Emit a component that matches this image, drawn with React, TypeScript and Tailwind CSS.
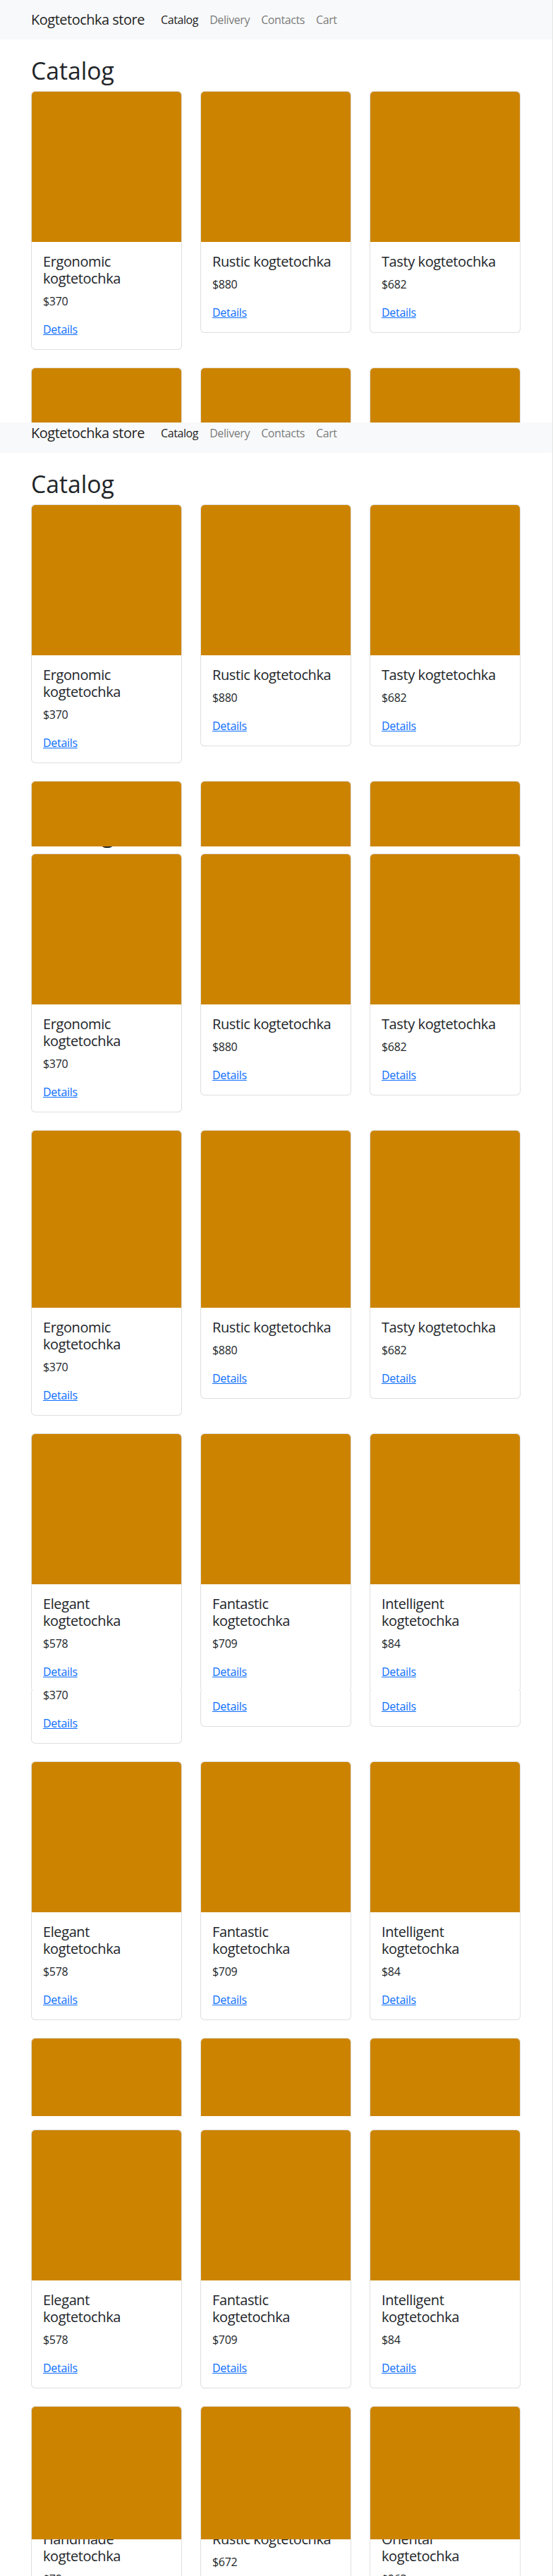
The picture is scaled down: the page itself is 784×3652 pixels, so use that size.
import React from "react";

type Product = { lines: string[]; price: string };

const ergonomic: Product = { lines: ["Ergonomic", "kogtetochka"], price: "$370" };
const rustic: Product = { lines: ["Rustic kogtetochka"], price: "$880" };
const tasty: Product = { lines: ["Tasty kogtetochka"], price: "$682" };
const elegant: Product = { lines: ["Elegant", "kogtetochka"], price: "$578" };
const fantastic: Product = { lines: ["Fantastic", "kogtetochka"], price: "$709" };
const intelligent: Product = { lines: ["Intelligent", "kogtetochka"], price: "$84" };
const handmade: Product = { lines: ["Handmade", "kogtetochka"], price: "$79" };
const rusticCheap: Product = { lines: ["Rustic kogtetochka"], price: "$672" };
const oriental: Product = { lines: ["Oriental", "kogtetochka"], price: "$963" };

const R1 = [ergonomic, rustic, tasty];
const R2 = [elegant, fantastic, intelligent];
const R3 = [handmade, rusticCheap, oriental];

// the capture was stitched from several scroll positions:
// h = visible height on screen, p = page offset at the top of that strip
const slices = [
  { h: 599, p: 0, rows: [R1, R1] },
  { h: 601, p: 13, rows: [R1, R1] },
  { h: 500, p: 119, rows: [R1, R1] },
  { h: 697, p: 581, rows: [R1, R1, R2] },
  { h: 603, p: 421, rows: [R1, R2, R3] },
  { h: 600, p: 502, rows: [R1, R2, R3] },
  { h: 52, p: 1155, rows: [R1, R2, R3] },
];

const navLinks = ["Catalog", "Delivery", "Contacts", "Cart"];

const Navbar = () => (
  <nav className="h-[56px] bg-[#f8f9fa] flex items-center px-[44px]">
    <a className="w-[176px] shrink-0 whitespace-nowrap text-[20px] leading-[30px] tracking-[-0.5px] text-black/90">
      Kogtetochka store
    </a>
    <div className="flex items-center">
      {navLinks.map((label, i) => (
        <a
          key={label}
          className={`px-2 text-[16px] leading-[24px] tracking-[-0.4px] ${
            i === 0 ? "text-black/90" : "text-black/55"
          }`}
        >
          {label}
        </a>
      ))}
    </div>
  </nav>
);

const Card = ({ product }: { product: Product }) => (
  <div className="w-[214px] shrink-0 rounded-[6px] border border-black/[0.125] bg-white overflow-hidden">
    <div className="h-[213px] bg-[#cc8400]" />
    <div className="p-4 text-[16px] leading-[24px] tracking-[-0.3px] text-[#212529]">
      <h5 className="mb-2 text-[20px] leading-[24px] font-medium tracking-[-0.4px]">
        {product.lines.map((line) => (
          <span key={line} className="block whitespace-nowrap">
            {line}
          </span>
        ))}
      </h5>
      <p className="mb-4">{product.price}</p>
      <a className="text-[#0d6efd] underline">Details</a>
    </div>
  </div>
);

const Page = ({ rows }: { rows: Product[][] }) => (
  <div>
    <Navbar />
    <main className="px-[44px] pb-10">
      <h1 className="mt-6 mb-[9px] text-[33.76px] leading-[40px] font-medium text-[#212529]">
        Catalog
      </h1>
      <div className="flex flex-col gap-[25px]">
        {rows.map((row, r) => (
          <div key={r} className="flex items-start gap-[26px]">
            {row.map((product, c) => (
              <Card key={c} product={product} />
            ))}
          </div>
        ))}
      </div>
    </main>
  </div>
);

export default function App() {
  return (
    <div className="w-[784px] bg-white border-r border-[#e3e3e3] font-['Open_Sans','Liberation_Sans',sans-serif]">
      {slices.map((s, i) => (
        <div key={i} className="overflow-hidden" style={{ height: s.h }}>
          <div style={{ marginTop: -s.p }}>
            <Page rows={s.rows} />
          </div>
        </div>
      ))}
    </div>
  );
}
